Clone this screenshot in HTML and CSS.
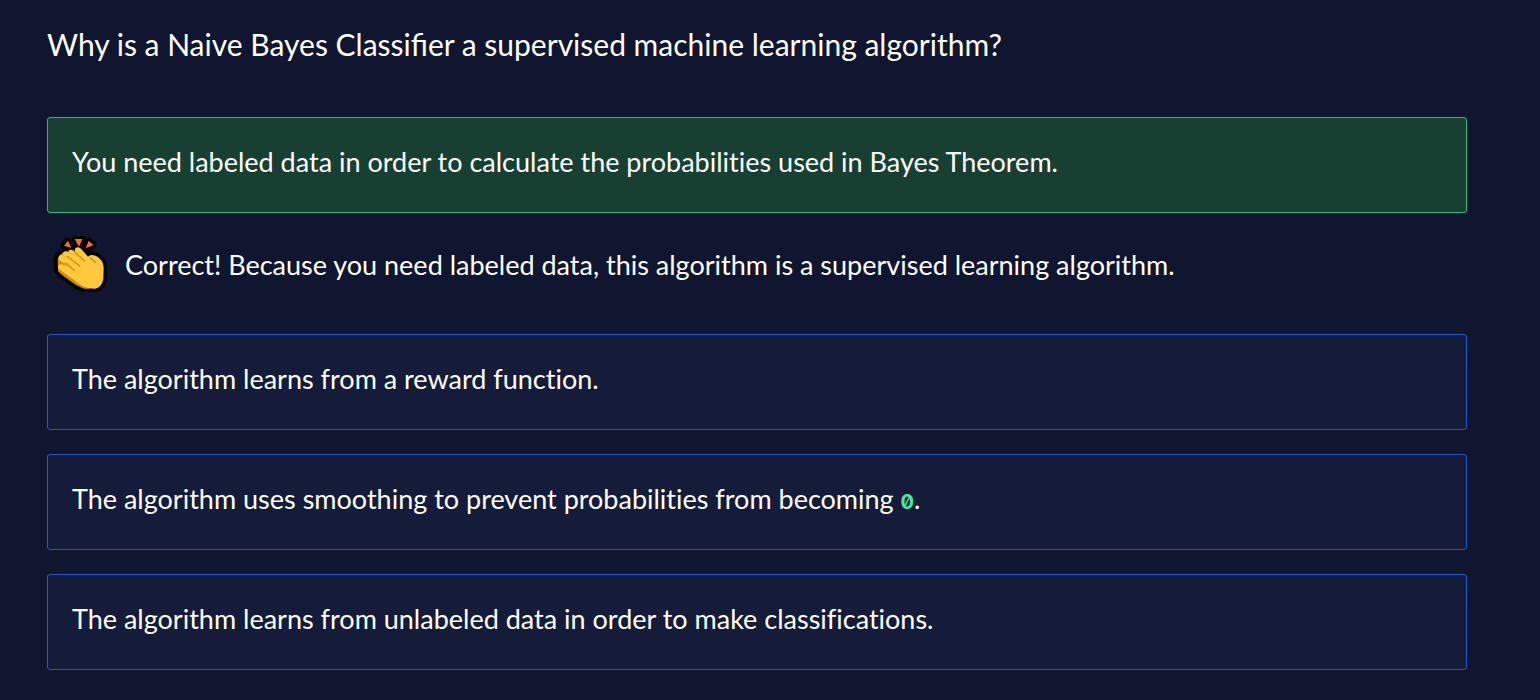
FILE: index.html
```html
<!DOCTYPE html>
<html lang="en">
<head>
<meta charset="utf-8">
<title>Quiz</title>
<link rel="stylesheet" href="styles.css">
</head>
<body>
<main class="quiz">
  <h1 class="question">Why is a Naive Bayes Classifier a supervised machine learning algorithm?</h1>
  <div class="answers">
    <button type="button" class="answer correct">You need labeled data in order to calculate the probabilities used in Bayes Theorem.</button>
    <div class="feedback">
      <svg class="clap" viewBox="21 24 192 192" aria-hidden="true">
        <g stroke="#000" stroke-width="22" stroke-linejoin="round" fill="#000">
          <path d="M72 62 82 49 92 67ZM106 44 126 44 117 64ZM146 49 158 60 139 69Z"/>
          <path d="M53 128 52 104 58 88 72 80 87 74 104 74 112 68 123 73 144 93 155 89 170 94 183 106 190 122 190 158 184 178 169 190 133 190 108 180 66 150 52 134Z"/>
        </g>
        <path fill="#ff6d1f" d="M72 62 84 47 94 68ZM104 42 127 42 117 65ZM146 47 160 60 137 70Z"/>
        <path fill="#d18d0c" d="M54 132 53 104 60 90 72 80 90 80 140 120 150 191 133 191 108 180 66 150 54 138Z"/>
        <path fill="#ffc83d" d="M105 80C101 67 114 63 123 71L144 95C152 87 164 90 172 95C184 103 191 114 191 130L190 163C186 181 176 191 163 191C141 191 124 183 110 171L57 132C50 124 58 114 69 119L86 126 58 106C50 98 59 86 68 91L98 110 70 91C66 83 75 76 83 80L110 96 85 80C85 74 94 73 98 76L112 85Z"/>
        <g fill="none" stroke="#d18d0c" stroke-width="4" stroke-linecap="round" stroke-linejoin="round">
          <path d="M72 116 82 117 104 137M82 94 119 123M105 82 134 108M151 99 167 113"/>
        </g>
      </svg>
      <p class="feedback-text">Correct! Because you need labeled data, this algorithm is a supervised learning algorithm.</p>
    </div>
    <button type="button" class="answer">The algorithm learns from a reward function.</button>
    <button type="button" class="answer">The algorithm uses smoothing to prevent probabilities from becoming <code class="code">0</code>.</button>
    <button type="button" class="answer">The algorithm learns from unlabeled data in order to make classifications.</button>
  </div>
</main>
</body>
</html>
```
FILE: styles.css
```css
* { box-sizing: border-box; }
body {
  margin: 0;
  background: #10162f;
  color: #fff;
  font-family: Lato, sans-serif;
}
.quiz { padding: 24px 73px 30px 47px; }
.question { margin: 0; font-size: 30px; line-height: 40px; font-weight: 400; }
.answers { display: flex; flex-direction: column; margin-top: 53px; }
.answer {
  width: 100%;
  min-height: 96px;
  padding: 24px 24px 30px;
  border: 1px solid #2457c9;
  border-radius: 3px;
  background: #151c39;
  color: inherit;
  font: inherit;
  font-size: 27px;
  line-height: 40px;
  font-variant-ligatures: none;
  text-align: left;
}
.answer + .answer { margin-top: 24px; }
.correct { background: #174033; border-color: #37b383; }
.feedback { display: flex; align-items: center; gap: 14px; margin: 20px 0 37px; }
.clap { width: 64px; height: 64px; flex: none; }
.feedback-text { margin: 0; font-size: 27px; line-height: 40px; font-variant-ligatures: none; }
.code { color: #4be5a8; font: 700 20px Inter, sans-serif; font-variant-numeric: slashed-zero; }
```
